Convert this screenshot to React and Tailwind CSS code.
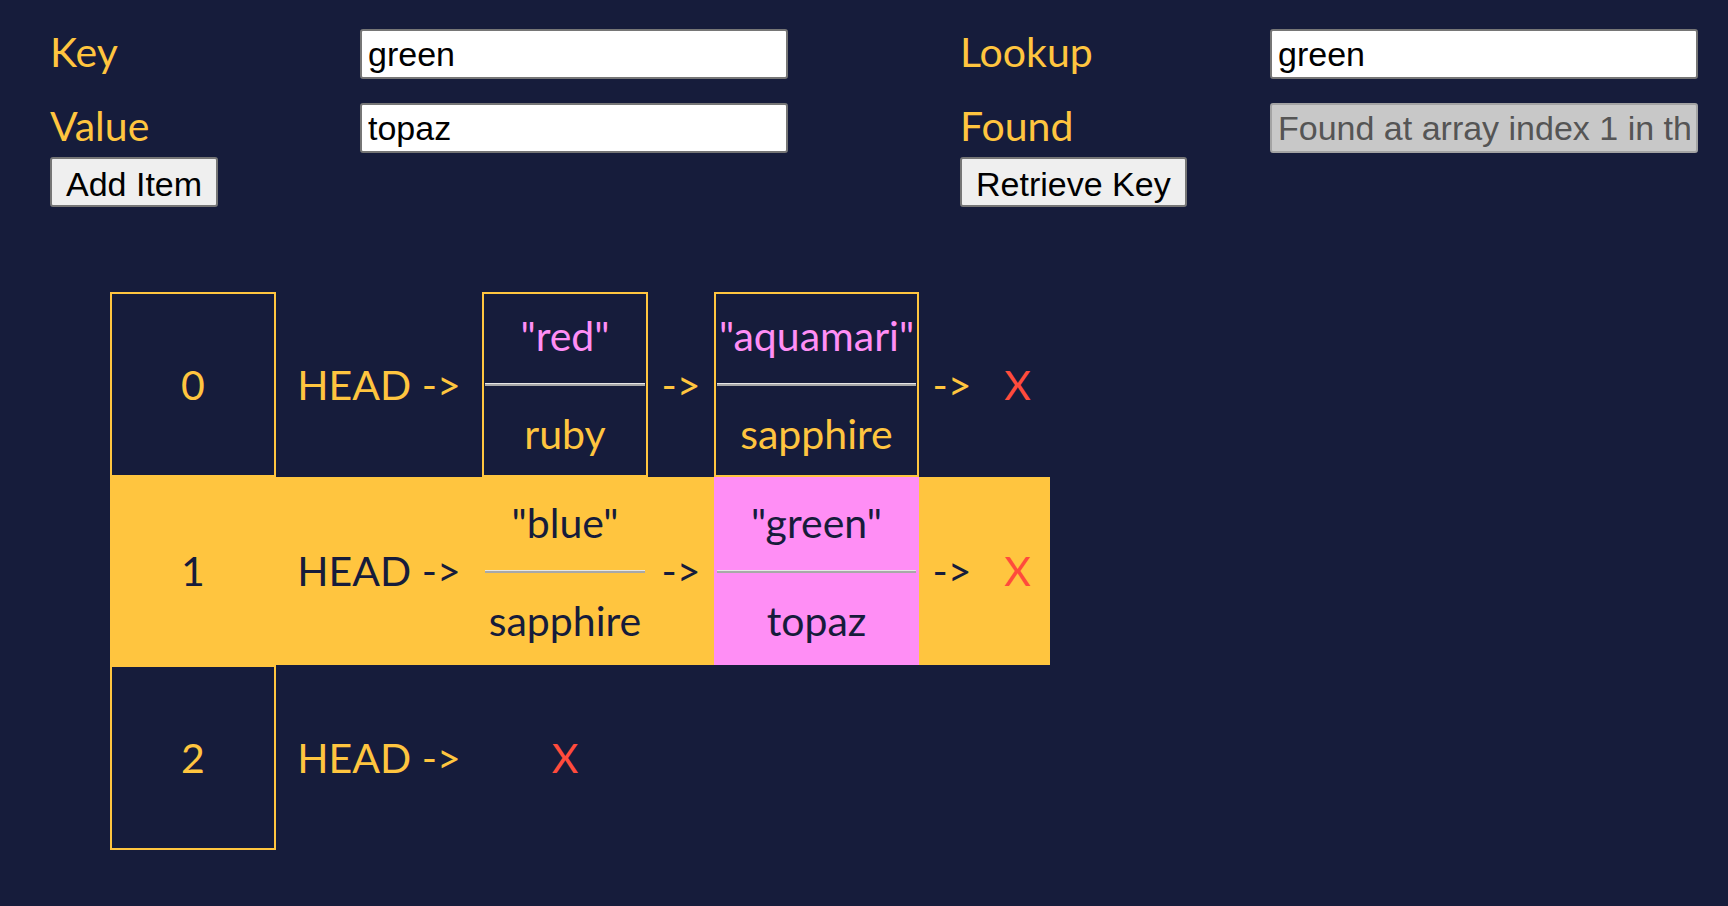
import React from "react";

const rows = [
  { index: 0, nodes: [{ key: "red", value: "ruby" }, { key: "aquamari", value: "sapphire" }] },
  { index: 1, hit: true, nodes: [{ key: "blue", value: "sapphire" }, { key: "green", value: "topaz", found: true }] },
  { index: 2, nodes: [] },
];

const nodeWidths = ["w-[166px]", "w-[205px]"];

const Field = ({ label, value, disabled, className = "" }) => (
  <div className={`flex items-center ${className}`}>
    <label className="w-[310px] text-[41px] text-[#ffc53f] leading-[50px] -mt-[4px]">{label}</label>
    <input
      readOnly
      value={value}
      className={`w-[428px] h-[50px] rounded-[3px] border-2 px-[6px] text-[34px] font-['Liberation_Sans',Arial,sans-serif] outline-none ${
        disabled ? "bg-[#c8c8c8] border-[#a3a3a3] text-[#555]" : "bg-white border-[#767676] text-black"
      }`}
    />
  </div>
);

const Btn = ({ children }) => (
  <button
    type="button"
    className="h-[50px] px-[14px] rounded-[3px] border-2 border-[#767676] bg-[#efefef] text-[34px] text-black font-['Liberation_Sans',Arial,sans-serif]"
  >
    {children}
  </button>
);

const Node = ({ node, width, hit }) => (
  <div
    className={`${width} h-full flex flex-col justify-center border-2 ${
      node.found ? "bg-[#ff8ef5] border-[#ff8ef5] h-[184px]" : "border-[#ffc53f]"
    }`}
  >
    <div className={`text-center leading-[55px] whitespace-nowrap ${hit ? "text-[#161c3b]" : "text-[#ff8ef5]"}`}>
      "{node.key}"
    </div>
    <div className="mx-px my-[20px] h-[3px] border-t border-b-2 border-t-[#e6e6e6] border-b-[#a8a8a8]" />
    <div className={`text-center leading-[55px] ${hit ? "text-[#161c3b]" : "text-[#ffc53f]"}`}>{node.value}</div>
  </div>
);

const Row = ({ row }) => {
  const fg = row.hit ? "text-[#161c3b]" : "text-[#ffc53f]";
  return (
    <div className={`flex items-center w-[940px] ${row.hit ? "bg-[#ffc53f] h-[188px]" : "h-[185px]"}`}>
      <div className={`w-[166px] h-full flex items-center justify-center border-2 border-[#ffc53f] ${fg}`}>
        {row.index}
      </div>
      <div className={`w-[206px] text-center whitespace-nowrap ${fg}`}>HEAD -&gt;</div>
      {row.nodes.map((n, i) => (
        <React.Fragment key={i}>
          {i > 0 && <div className={`w-[66px] text-center ${fg}`}>-&gt;</div>}
          <Node node={n} width={nodeWidths[i]} hit={row.hit} />
        </React.Fragment>
      ))}
      {row.nodes.length > 0 ? (
        <>
          <div className={`w-[66px] text-center ${fg}`}>-&gt;</div>
          <div className="w-[65px] text-center text-[#ff4b3c]">X</div>
        </>
      ) : (
        <div className="w-[166px] text-center text-[#ff4b3c]">X</div>
      )}
    </div>
  );
};

export default function App() {
  return (
    <div className="min-h-screen bg-[#161c3b] font-['Lato',sans-serif]">
      <div className="flex pl-[50px] pt-[29px]">
        <div className="w-[910px] flex flex-col items-start">
          <Field label="Key" value="green" />
          <Field label="Value" value="topaz" className="mt-[24px]" />
          <div className="mt-[4px]">
            <Btn>Add Item</Btn>
          </div>
        </div>
        <div className="w-[740px] flex flex-col items-start">
          <Field label="Lookup" value="green" />
          <Field label="Found" value="Found at array index 1 in the linked list" disabled className="mt-[24px]" />
          <div className="mt-[4px]">
            <Btn>Retrieve Key</Btn>
          </div>
        </div>
      </div>

      <div className="ml-[110px] mt-[85px] text-[41px]">
        {rows.map((r) => (
          <Row key={r.index} row={r} />
        ))}
      </div>
    </div>
  );
}
